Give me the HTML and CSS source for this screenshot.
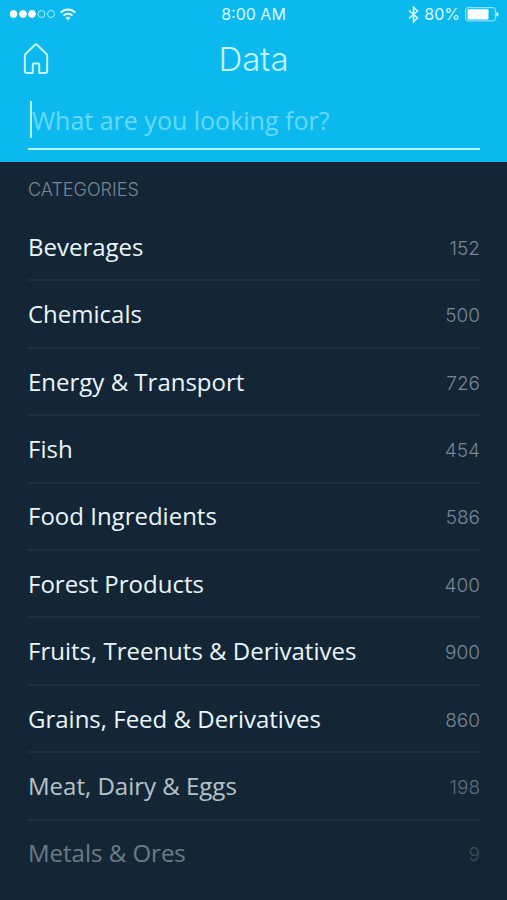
FILE: index.html
```html
<!DOCTYPE html>
<html lang="en">
<head>
  <meta charset="utf-8">
  <meta name="viewport" content="width=device-width, initial-scale=1">
  <title>Data</title>
  <link rel="stylesheet" href="styles.css">
</head>
<body>
  <header class="header">
    <div class="status-bar">
      <div class="status-left">
        <svg width="47" height="10" viewBox="0 0 47 10" fill="#fff" stroke="#fff">
          <circle cx="5.5" cy="5" r="3.4"/>
          <circle cx="15" cy="5" r="3.4"/>
          <circle cx="24" cy="5" r="3.4"/>
          <g fill="none" stroke="#a5eefc">
            <circle cx="33.5" cy="5" r="3.5"/>
            <circle cx="43" cy="5" r="3.5"/>
          </g>
        </svg>
        <svg width="16" height="13" viewBox="0 0 16 13" fill="none" stroke="#e6fcff" stroke-width="2">
          <path d="M.8 4.6C4.8.4 11.2.4 15.2 4.6"/>
          <path d="M3.5 7.6C6 5.1 10 5.1 12.5 7.6"/>
          <path d="M8 12.6L5.5 9.8C7 8.5 9 8.5 10.5 9.8Z" fill="#e6fcff" stroke="none"/>
        </svg>
      </div>
      <span class="time">8:00 AM</span>
      <div class="status-right">
        <svg width="11" height="17" viewBox="0 0 11 17" fill="none" stroke="#d8faff" stroke-width="1.6">
          <path d="M1 4.5L9.5 12L5.5 15.7V1.3L9.5 5L1 12.5"/>
        </svg>
        <span>80%</span>
        <svg width="34" height="15" viewBox="0 0 34 15">
          <rect x=".7" y=".7" width="29.6" height="13.2" rx="2" fill="none" stroke="#a5eefc"/>
          <rect x="2.5" y="2.2" width="21" height="10.4" rx="1" fill="#fff"/>
          <path d="M31.3 5C34.3 5.6 34.3 9 31.3 9.6Z" fill="#d8faff"/>
        </svg>
      </div>
    </div>

    <nav class="nav-bar">
      <a class="home" href="#" aria-label="Home">
        <svg width="26" height="32" viewBox="0 0 26 32" fill="none" stroke="#c4f6ff" stroke-width="2" stroke-linejoin="round">
          <path d="M1.8 12.7Q1.8 11.7 2.5 11L12 1.8Q13 1 14 1.8L23.5 11Q24.2 11.7 24.2 12.7V27.7Q24.2 30 21.9 30H16.2V21.5Q16.2 20.5 15.2 20.5H10.8Q9.8 20.5 9.8 21.5V30H4.1Q1.8 30 1.8 27.7Z"/>
        </svg>
      </a>
      <h1>Data</h1>
    </nav>

    <form class="search">
      <input type="text" id="search" aria-label="Search" placeholder="What are you looking for?">
    </form>
  </header>

  <main class="categories">
    <h2>CATEGORIES</h2>
    <ul class="list">
      <li><a href="#">Beverages <span class="count">152</span></a></li>
      <li><a href="#">Chemicals <span class="count">500</span></a></li>
      <li><a href="#">Energy &amp; Transport <span class="count">726</span></a></li>
      <li><a href="#">Fish <span class="count">454</span></a></li>
      <li><a href="#">Food Ingredients <span class="count">586</span></a></li>
      <li><a href="#">Forest Products <span class="count">400</span></a></li>
      <li><a href="#">Fruits, Treenuts &amp; Derivatives <span class="count">900</span></a></li>
      <li><a href="#">Grains, Feed &amp; Derivatives <span class="count">860</span></a></li>
      <li class="fade"><a href="#">Meat, Dairy &amp; Eggs <span class="count">198</span></a></li>
      <li class="fade-more"><a href="#">Metals &amp; Ores <span class="count">9</span></a></li>
    </ul>
  </main>
</body>
</html>
```

FILE: styles.css
```css
* {
  box-sizing: border-box;
}

body {
  margin: 0;
  min-height: 100vh;
  display: flex;
  flex-direction: column;
  background-color: #142536;
  font-family: "Open Sans", sans-serif;
  color: #e9f6fb;
}

svg {
  display: block;
}

a {
  color: inherit;
  text-decoration: none;
}

.header {
  background-color: #0cb9ef;
  padding-bottom: 12px;
}

.status-bar {
  display: grid;
  grid-template-columns: 1fr auto 1fr;
  align-items: center;
  height: 28px;
  padding: 0 8px;
  font-family: Inter, sans-serif;
  font-size: 16px;
  color: #d8faff;
}

.status-left,
.status-right {
  display: flex;
  align-items: center;
  gap: 5px;
}

.status-right {
  justify-content: flex-end;
}

.nav-bar {
  display: grid;
  grid-template-columns: 1fr auto 1fr;
  align-items: center;
  height: 61px;
  padding: 0 23px;
}

.home {
  justify-self: start;
}

h1 {
  margin: 0;
  font-family: Inter, sans-serif;
  font-size: 33px;
  font-weight: 300;
  color: #c4f6ff;
}

.search {
  margin: 12px 27px 0 28px;
  padding: 0 0 10px 2px;
  border-bottom: 2px solid #b9f3ff;
}

.search input {
  display: block;
  width: 100%;
  height: 37px;
  padding: 0;
  border: 0;
  border-left: 2px solid #b9f3ff;
  outline: none;
  background: none;
  font-family: inherit;
  font-size: 25px;
  color: #fff;
}

.search input::placeholder {
  color: #66d9fa;
  font-weight: 500;
  opacity: 1;
}

.categories {
  flex: 1;
  display: flex;
  flex-direction: column;
  padding: 16px 27px 14px 28px;
}

h2 {
  margin: 0 0 12px;
  font-family: Inter, sans-serif;
  font-size: 18px;
  line-height: 24px;
  font-weight: 300;
  color: #778695;
}

.list {
  flex: 1;
  display: flex;
  flex-direction: column;
  margin: 0;
  padding: 0;
  list-style: none;
}

.list li {
  flex: 1;
  display: flex;
  border-bottom: 2px solid #1e2f3f;
}

.list li:last-child {
  border-bottom: 0;
}

.list a {
  flex: 1;
  display: flex;
  justify-content: space-between;
  align-items: center;
  font-size: 24px;
  line-height: 34px;
}

.count {
  padding-top: 4px;
  font-family: Inter, sans-serif;
  font-size: 19px;
  font-weight: 300;
  color: #778695;
}

.fade a {
  opacity: 0.75;
}

.fade-more a {
  opacity: 0.4;
}
```
